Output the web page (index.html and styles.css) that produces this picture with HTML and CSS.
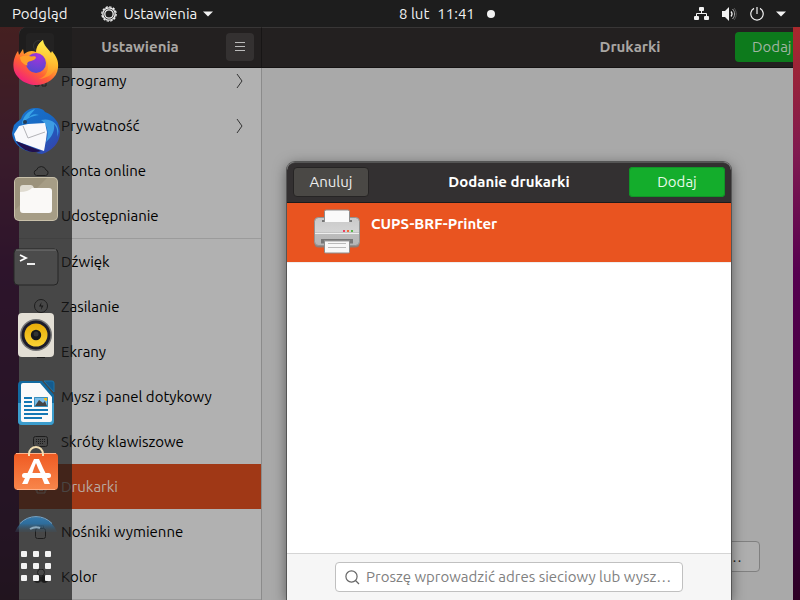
FILE: index.html
```html
<!DOCTYPE html>
<html lang="pl">
<head>
<meta charset="utf-8">
<title>Ustawienia – Drukarki</title>
<link rel="stylesheet" href="styles.css">
</head>
<body>
<header class="topbar">
  <div class="topbar-left">
    <button class="bar-button" type="button">Podgląd</button>
    <button class="bar-button app-menu" type="button">
      <svg width="16" height="16" viewBox="0 0 16 16" fill="none" stroke="#f2f2f2"><circle cx="8" cy="8" r="7.200" stroke-width="1.2" stroke-dasharray="2.400 1.370"/><circle cx="8" cy="8" r="6.200" stroke-width="1.300"/><circle cx="8" cy="8" r="4.200" stroke-width="1.300"/></svg>
      Ustawienia
      <svg width="10" height="6" viewBox="0 0 10 6"><path d="M0 .5h10L5 5.5z" fill="#f2f2f2"/></svg>
    </button>
  </div>
  <div class="topbar-right">
    <button class="bar-button clock" type="button"><span>8 lut</span><span>11:41</span><span class="clock-dot"></span></button>
    <button class="bar-button status" type="button" aria-label="System">
      <svg width="16" height="14" viewBox="0 0 16 14" fill="#f2f2f2"><rect x="5" width="5" height="4" rx="1"/><rect y="9" width="5" height="4" rx="1"/><rect x="10" y="9" width="5" height="4" rx="1"/><path d="M7.5 4v3M2.500 10V6.500h10v3.500" fill="none" stroke="#f2f2f2"/></svg>
      <svg width="16" height="14" viewBox="0 0 16 14"><path d="M0 4h3l4-4v14l-4-4H0z" fill="#f2f2f2"/><path d="M9 4.500c1.300 1.500 1.300 3.500 0 5" fill="none" stroke="#f2f2f2" stroke-width="1.2"/><path d="M10.500 2c2.800 2.800 2.800 7.200 0 10" fill="none" stroke="#aaa"/><path d="M12 1c3 3.500 3 8.500 0 12" fill="none" stroke="#555"/></svg>
      <svg width="14" height="14" viewBox="0 0 14 14" fill="none" stroke="#f2f2f2" stroke-width="1.2"><path d="M4 1.400a6.200 6.200 0 1 0 6 0M7 0v7"/></svg>
      <svg width="10" height="6" viewBox="0 0 10 6"><path d="M0 .5h10L5 5.5z" fill="#f2f2f2"/></svg>
    </button>
  </div>
</header>

<div class="desktop">
  <div class="window">
    <aside class="sidebar">
      <div class="headerbar side-header">
        <button class="square search-toggle" type="button" aria-label="Szukaj"><svg width="16" height="16" viewBox="0 0 16 16" fill="none" stroke="#777"><circle cx="7" cy="7" r="5.500"/><path d="M11 11l3 3"/></svg></button>
        <h1>Ustawienia</h1>
        <button class="square" type="button" aria-label="Menu"><svg width="10" height="10" viewBox="0 0 10 10" stroke="#bbb"><path d="M0 .5h10M0 4.500h10M0 8.500h10"/></svg></button>
      </div>
      <nav class="list">
        <div class="group">
          <a href="#"><svg class="ico" viewBox="0 0 16 16"><path d="M2 2h4v4H2zM9 2h4v4H9zM2 9h4v4H2zM9 9h4v4H9z"/></svg><span>Programy</span><svg class="chevron" width="7" height="16" viewBox="0 0 7 16"><path d="M1 1l5 7-5 7"/></svg></a>
          <a href="#"><svg class="ico" viewBox="0 0 16 16"><path d="M4 7V5a4 4 0 0 1 8 0v2M3 7h10v7H3z"/></svg><span>Prywatność</span><svg class="chevron" width="7" height="16" viewBox="0 0 7 16"><path d="M1 1l5 7-5 7"/></svg></a>
          <a href="#"><svg class="ico" viewBox="0 0 16 16"><path d="M3.500 12.500h9a2.800 2.800 0 0 0 .5-5.500 5 5 0 0 0-9.500 0 2.800 2.800 0 0 0 0 5.500z"/></svg><span>Konta online</span></a>
          <a href="#"><svg class="ico" viewBox="0 0 16 16"><path d="M5 8l6-4M5 8l6 4"/></svg><span>Udostępnianie</span></a>
        </div>
        <div class="group">
          <a href="#"><svg class="ico" viewBox="0 0 16 16"><path d="M2 6h3l3-3v10l-3-3H2z"/></svg><span>Dźwięk</span></a>
          <a href="#"><svg class="ico" viewBox="0 0 16 16"><circle cx="8" cy="7" r="6.500"/><path d="M8.500 3L6 7.500h2.500L8 11l2.500-4.500H8z" fill="#111" stroke="none"/></svg><span>Zasilanie</span></a>
          <a href="#"><svg class="ico" viewBox="0 0 16 16"><path d="M1 2h14v9H1zM4 13.500h8"/></svg><span>Ekrany</span></a>
          <a href="#"><svg class="ico" viewBox="0 0 16 16"><rect x="4" y="1" width="8" height="14" rx="4"/></svg><span>Mysz i panel dotykowy</span></a>
          <a href="#"><svg class="ico" viewBox="0 0 16 16"><rect x=".5" y="2.500" width="14" height="10" rx="2"/><path d="M3 5.500h9M3 7.500h9M5 9.500h5" stroke-dasharray="1 1"/></svg><span>Skróty klawiszowe</span></a>
          <a href="#" class="selected" aria-current="page"><svg class="ico" viewBox="0 0 16 16"><path d="M4 5V1h8v4M4 11H2V5h12v6h-2M4 9h8v5H4zM6 11.500h4"/></svg><span>Drukarki</span></a>
          <a href="#"><svg class="ico" viewBox="0 0 16 16"><rect x="2.500" y="4.500" width="10" height="10" rx="2"/><path d="M4.500 4.500v-3h6v3M6 3h1M8 3h1"/></svg><span>Nośniki wymienne</span></a>
          <a href="#"><svg class="ico" viewBox="0 0 16 16"><circle cx="8" cy="3.500" r="3.500"/><circle cx="4.500" cy="10" r="3.500" fill="#333"/><circle cx="11.500" cy="10" r="3.500" fill="#111"/></svg><span>Kolor</span></a>
        </div>
      </nav>
    </aside>
    <main class="content">
      <div class="headerbar main-header">
        <h2>Drukarki</h2>
        <button class="add add-dim" type="button">Dodaj</button>
      </div>
      <div class="pane"><button class="behind" type="button">Dodaj drukarkę…</button></div>
    </main>
  </div>

  <section class="dialog" role="dialog" aria-labelledby="dialog-title">
    <div class="dialog-header">
      <button class="cancel" type="button">Anuluj</button>
      <h2 id="dialog-title">Dodanie drukarki</h2>
      <button class="add" type="button">Dodaj</button>
    </div>
    <div class="printer-list">
      <div class="printer">
        <svg width="48" height="46" viewBox="0 0 48 46">
          <defs><linearGradient id="body" x2="0" y2="1"><stop offset="0" stop-color="#c9c9c9"/><stop offset=".5" stop-color="#d4d4d4"/><stop offset=".55" stop-color="#bdbdbd"/><stop offset="1" stop-color="#b5b5b5"/></linearGradient></defs>
          <rect x="1.500" y="9.500" width="45" height="29" rx="4" fill="#8f7d76"/>
          <rect x="1.500" y="8.500" width="45" height="28" rx="4" fill="url(#body)" stroke="#929292"/>
          <path d="M2 24.500h44" stroke="#eee"/>
          <path d="M9 11h30v2H9zM8 30h32v4.500H8z" fill="#777"/>
          <path d="M11.500 12.500v-10q0-1.500 1.500-1.500h22q1.500 0 1.500 1.500v10z" fill="#fafafa" stroke="#8d8d8d"/>
          <path d="M12 12.500h24" stroke="#fafafa"/>
          <path d="M11.500 31.500h25v11.500q0 1-1 1h-23q-1 0-1-1z" fill="#f8f8f8" stroke="#8d8d8d"/>
          <path d="M12 32.500h24" stroke="#ccc"/><path d="M15 34.500h18M15 38.500h18" stroke="#bbb"/>
          <path d="M30 21h2v2h-2z" fill="#ed4060"/><path d="M34 21h2v2h-2z" fill="#f46a35"/><path d="M38 21h2v2h-2z" fill="#58b947"/>
        </svg>
        <strong>CUPS-BRF-Printer</strong>
      </div>
    </div>
    <div class="dialog-footer">
      <label class="search">
        <svg width="15" height="15" viewBox="0 0 15 15" fill="none" stroke="#666" stroke-width="1.200"><circle cx="6.500" cy="6.500" r="5.600"/><path d="M10.500 10.500l3.500 3.500"/></svg>
        <input type="text" aria-label="Adres sieciowy" placeholder="Proszę wprowadzić adres sieciowy lub wyszukać drukarkę">
      </label>
    </div>
  </section>

  <nav class="dock" aria-label="Dok">
    <div class="dock-apps">
      <button type="button" aria-label="Firefox"><svg width="48" height="48" viewBox="0 0 48 48">
        <defs><linearGradient id="fx" x1=".85" y1="0" x2=".2" y2="1"><stop offset="0" stop-color="#fff24a"/><stop offset=".35" stop-color="#ffb92a"/><stop offset=".65" stop-color="#ff5f35"/><stop offset="1" stop-color="#f0148a"/></linearGradient><radialGradient id="globe" cx=".6" cy=".1" r=".9"><stop offset="0" stop-color="#a632dc"/><stop offset="1" stop-color="#5548d0"/></radialGradient><linearGradient id="tail" x2="0" y2="1"><stop offset="0" stop-color="#fff44f"/><stop offset="1" stop-color="#ff9a24"/></linearGradient></defs>
        <path d="M6 12l1 4 4-6 1 5c4-3 8-4 12-2 0-5 3-9 7-12 0 6 5 8 8 13l1-2c4 5 7 10 6 17-1 10-11 17-22 17S2 38 1.500 28C1 22 3 16 6 12z" fill="url(#fx)"/>
        <path d="M31 1c-5 4-7 8-6 13 7 2 11 7 11 14 0 5-3 10-9 12 10-1 17-7 17-15 0-4-2-8-4-11l-1 4C38 10 32 8 31 1z" fill="url(#tail)" opacity=".75"/>
        <circle cx="24" cy="24" r="10" fill="url(#globe)"/>
        <path d="M8 18c4-2 8-1 12-.5 2-.5 4 0 4 1-1 3-4 3-7 4-2 1-2 2-1.500 4-4-1-7.500-4-7.500-8.500z" fill="#ffa02a"/>
      </svg></button>
      <button type="button" aria-label="Thunderbird"><svg width="50" height="50" viewBox="0 0 50 50">
        <defs><linearGradient id="tb" x2="1" y2="1"><stop offset="0" stop-color="#1b75cf"/><stop offset=".5" stop-color="#1768c3"/><stop offset="1" stop-color="#3b3ba9"/></linearGradient></defs>
        <path d="M10 13c2-7 8-11 14-11 6 0 9 2 10 4 8 3 15 10 15 20 0 11-8 19-18 22l-6-1 5-2C16 49 2 40 1 27l2-8 3-3z" fill="url(#tb)"/>
        <path d="M24 3c-7 2-13 8-13 16 3-6 9-9 17-10-6-2-8 1-10 2 2-4 5-6 6-8z" fill="#37a2e7"/>
        <path d="M30 14c7 5 8 14 5 22 6-5 9-11 8-18 3 3 4 8 3 13 5-10-4-20-16-17z" fill="#3d9ce3"/>
        <path d="M8 20l9-2 17-1 2 9-1 8-2 11L5 35l-2-7z" fill="#f8f8fb"/>
        <path d="M12 20l5 12 17-6" fill="none" stroke="#b3b3b8"/>
        <path d="M5 35l5 2 20 8c-8 3-19 0-25-10z" fill="#20104f"/><circle cx="14" cy="16" r="2" fill="#243c55"/>
      </svg></button>
      <button type="button" aria-label="Pliki"><svg width="46" height="46" viewBox="0 0 46 46">
        <rect x="1" y="1" width="44" height="44" rx="5" fill="#c9c1aa"/><rect x="2" y="2" width="42" height="42" rx="4" fill="#a69d86"/><path d="M6 2h28L2 34V6q0-4 4-4z" fill="#9b927b"/>
        <path d="M7 12q0-3 3-3h8q2 0 3 3v4H7z" fill="#dfdbd0"/><path d="M7 16q8 0 12-4h17q3 0 3 3v19q0 3-3 3H10q-3 0-3-3z" fill="#faf9f7"/>
      </svg></button>
      <button type="button" aria-label="Terminal"><svg width="46" height="38" viewBox="0 0 46 38">
        <rect x="1" y="1" width="44" height="36" rx="4" fill="#4b4b4b" stroke="#262626"/><path d="M3 2h40" stroke="#777"/><path d="M7 7l6 3-6 3" fill="none" stroke="#fff" stroke-width="1.800"/><path d="M14 16h8" stroke="#fff" stroke-width="1.800"/>
      </svg></button>
      <button type="button" aria-label="Rhythmbox"><svg width="38" height="46" viewBox="0 0 38 46">
        <defs><linearGradient id="rb" x2="0" y2="1"><stop offset="0" stop-color="#e8ac08"/><stop offset="1" stop-color="#f9d235"/></linearGradient></defs>
        <rect x="1" y="1" width="36" height="44" rx="4" fill="#e3dfd5"/><circle cx="19" cy="23" r="16" fill="#757575"/><circle cx="19" cy="23" r="14.500" fill="#1c1c2b"/><circle cx="19" cy="23" r="11.500" fill="url(#rb)"/><circle cx="19" cy="23" r="5.200" fill="#17171b"/><circle cx="19" cy="22" r="2.500" fill="#333"/>
      </svg></button>
      <button type="button" aria-label="LibreOffice Writer"><svg width="38" height="46" viewBox="0 0 38 46">
        <path d="M5 1h20l12 14v26q0 4-4 4H5q-4 0-4-4V5q0-4 4-4z" fill="#126aa0"/><path d="M1 23h36v18q0 4-4 4H5q-4 0-4-4z" fill="#3c9dcd"/><path d="M27 1h8q2 0 2 2v9z" fill="#155b8e" stroke="#1c75aa"/>
        <path d="M6 3h17l12 14v23q0 2-2 2H6q-2 0-2-2V5q0-2 2-2z" fill="#fafafa"/>
        <path d="M7 18h8M7 22h8M7 26h8M7 30h24M7 34h24M7 38h18" stroke="#1478b5" stroke-width="2"/><path d="M17 17h14v10H17z" fill="#79bce8"/><path d="M17.500 17.500h13v9h-13z" fill="none" stroke="#3b91bd"/><path d="M18 26l4-6 4 3 2-2 2 5z" fill="#444"/><path d="M27 18h3v3q-3 0-3-3z" fill="#f4bd1a"/>
      </svg></button>
      <button type="button" aria-label="Ubuntu Software"><svg width="46" height="52" viewBox="0 0 46 52">
        <defs><linearGradient id="us" x2="0" y2="1"><stop offset="0" stop-color="#ef5a22"/><stop offset="1" stop-color="#f8864b"/></linearGradient></defs>
        <rect x="1" y="8" width="44" height="37" rx="4" fill="url(#us)"/><path d="M3 8.500h40M4 44.500h38" stroke="#ffb088"/><path d="M16 11V9a7 7 0 0 1 14 0v2" fill="none" stroke="#f2dfb3" stroke-width="2"/>
        <path d="M21 14h5l4 9h-5l-2-5-2 5h-4zM12 33h5l-2 5q0 1-1 1H9zM29 33h5l3 6h-5q-1 0-1-1z" fill="#fff"/><rect x="9" y="28" width="29" height="5" rx="2.500" fill="#fff"/><path d="M17 23h4l-2 6h-5zM25 23h5l3 6h-5z" fill="#fff"/>
      </svg></button>
      <button type="button" aria-label="Pomoc"><svg class="help" width="46" height="46" viewBox="0 0 46 46">
        <defs><linearGradient id="hp" x2="0" y2="1"><stop offset="0" stop-color="#3479ad"/><stop offset=".15" stop-color="#2e6d9c"/><stop offset=".32" stop-color="#3a5365" stop-opacity=".3"/></linearGradient></defs>
        <circle cx="23" cy="23" r="22" fill="url(#hp)"/><path d="M7 7.500a22 22 0 0 1 32 0" fill="none" stroke="#76a9d0"/><path d="M17 13q5-3 10-1" fill="none" stroke="#8daabd" stroke-width="2"/>
      </svg></button>
    </div>
    <button class="show-apps" type="button" aria-label="Wyświetl programy"><svg width="30" height="30" viewBox="0 0 30 30" fill="#f3f3f3"><rect width="6" height="6" rx="1"/><rect x="12" width="6" height="6" rx="1"/><rect x="24" width="6" height="6" rx="1"/><rect y="12" width="6" height="6" rx="1"/><rect x="12" y="12" width="6" height="6" rx="1"/><rect x="24" y="12" width="6" height="6" rx="1"/><rect y="24" width="6" height="6" rx="1"/><rect x="12" y="24" width="6" height="6" rx="1"/><rect x="24" y="24" width="6" height="6" rx="1"/></svg></button>
  </nav>
</div>
</body>
</html>
```
FILE: styles.css
```css
* { box-sizing: border-box; }

body {
  margin: 0;
  height: 100vh;
  display: flex;
  flex-direction: column;
  overflow: hidden;
  font: 15px/20px Ubuntu, "Noto Sans", "Open Sans", sans-serif;
  color: #000;
}

button { font: inherit; color: inherit; border: 0; padding: 0; background: none; white-space: nowrap; }
svg { display: block; flex: none; }
h1, h2 { margin: 0; font-size: 15px; font-weight: 700; }

.topbar {
  flex: none;
  height: 27px;
  display: grid;
  grid-template-columns: 1fr 1fr;
  align-items: center;
  padding: 0 14px 0 12px;
  background: #1d1d1d;
  color: #f2f2f2;
}
.topbar-left { display: flex; gap: 34px; }
.topbar-right { display: flex; justify-content: space-between; }
.bar-button { display: flex; align-items: center; gap: 6px; }
.clock { gap: 8px; }
.clock-dot { width: 8px; height: 8px; margin-left: 4px; border-radius: 50%; background: #f2f2f2; }
.status { gap: 12px; }

.desktop {
  position: relative;
  flex: 1;
  min-height: 0;
  display: flex;
  padding: 0 7px 0 19px;
  background: linear-gradient(#a9292c, #801a50 22%, #560050 43%, #360033 90%, #2d0024);
}

.window { flex: 1; min-width: 0; display: flex; overflow: hidden; border-top-left-radius: 8px; background: #a9a9a9; }
.sidebar { flex: none; width: 243px; display: flex; flex-direction: column; border-right: 1px solid #8b8b8b; background: #b1b1b1; }
.headerbar {
  flex: none;
  height: 41px;
  display: flex;
  align-items: center;
  padding-bottom: 2px;
  background: #232020;
  border-top: 1px solid #383636;
  border-bottom: 1px solid #151313;
  color: #a9a6a3;
}
.side-header { justify-content: space-between; margin-right: -1px; padding-left: 7px; padding-right: 7px; border-right: 1px solid #171515; }
.square { width: 28px; height: 28px; display: grid; place-items: center; border-radius: 4px; background: #343131; }

.list { flex: 1; min-height: 0; overflow: hidden; }
.group { border-bottom: 1px solid #9b9b9b; }
.group:first-child { margin-top: -10px; }
.list a { height: 45px; display: flex; align-items: center; gap: 12px; padding: 0 18px 0 14px; color: #000; text-decoration: none; }
.list a span { flex: 1; }
.list .selected { background: #a03816; color: #b9a9a2; }
.ico { width: 16px; height: 16px; fill: none; stroke: #222; }
.selected .ico { stroke: #b9a9a2; }
.chevron { fill: none; stroke: #333; }

.content { flex: 1; min-width: 0; display: flex; flex-direction: column; }
.main-header { padding-left: 263px; }
.main-header h2 { flex: 1; min-width: 0; text-align: center; }
.add {
  flex: none;
  width: 96px;
  height: 30px;
  border-radius: 4px;
  background: #14ad2c;
  color: #e8fbe9;
  box-shadow: inset 0 0 0 1px #109527;
}
.add-dim { width: 58px; padding-left: 17px; border-radius: 4px 0 0 4px; background: #0d7a1c; color: #a1b5a2; box-shadow: none; text-align: left; }
.pane { flex: 1; display: flex; align-items: flex-end; justify-content: flex-end; padding: 0 33px 28px; }
.behind { height: 31px; padding: 0 17px; border: 1px solid #808080; border-radius: 4px; background: #aeaeae; color: #222; }

.dialog {
  position: absolute;
  top: 135px;
  right: 69px;
  bottom: 0;
  left: 287px;
  display: flex;
  flex-direction: column;
  border-radius: 8px 8px 0 0;
  background: #fff;
  box-shadow: 0 0 0 1px #555, 0 3px 14px rgba(0, 0, 0, .5);
}
.dialog-header {
  flex: none;
  height: 41px;
  display: grid;
  grid-template-columns: 1fr auto 1fr;
  align-items: center;
  padding: 0 6px 2px;
  border-top: 1px solid #555;
  border-bottom: 1px solid #1d1b1b;
  border-radius: 8px 8px 0 0;
  background: #333031;
  color: #fff;
}
.dialog-header .add { justify-self: end; }
.cancel { width: 76px; height: 30px; border: 1px solid #262424; border-radius: 4px; background: #4a4845; color: #eee; }

.printer-list { flex: 1; }
.printer { height: 60px; display: flex; gap: 10px; padding: 6px 26px; border-bottom: 1px solid #eee; background: #e95420; color: #fff; }
.printer strong { padding-top: 5px; }

.dialog-footer { flex: none; height: 47px; display: flex; justify-content: center; align-items: flex-start; padding: 8px 48px; border-top: 1px solid #d5d5d5; background: #f6f6f6; }
.search { flex: 1; height: 30px; display: flex; align-items: center; gap: 6px; padding: 0 6px 0 9px; border: 1px solid #c0c0c0; border-radius: 4px; background: #fff; }
.search input { flex: 1; min-width: 0; padding: 0; border: 0; outline: 0; background: none; font: inherit; text-overflow: ellipsis; }
.search input::placeholder { color: #808080; }

.dock { position: absolute; top: 0; bottom: 0; left: 0; width: 72px; display: flex; flex-direction: column; padding-top: 2px; background: rgba(28, 28, 28, .71); }
.dock button { flex: none; width: 100%; height: 68px; display: grid; place-items: center; }
.dock-apps { flex: 1; min-height: 0; display: flex; flex-direction: column; overflow: hidden; }
```
